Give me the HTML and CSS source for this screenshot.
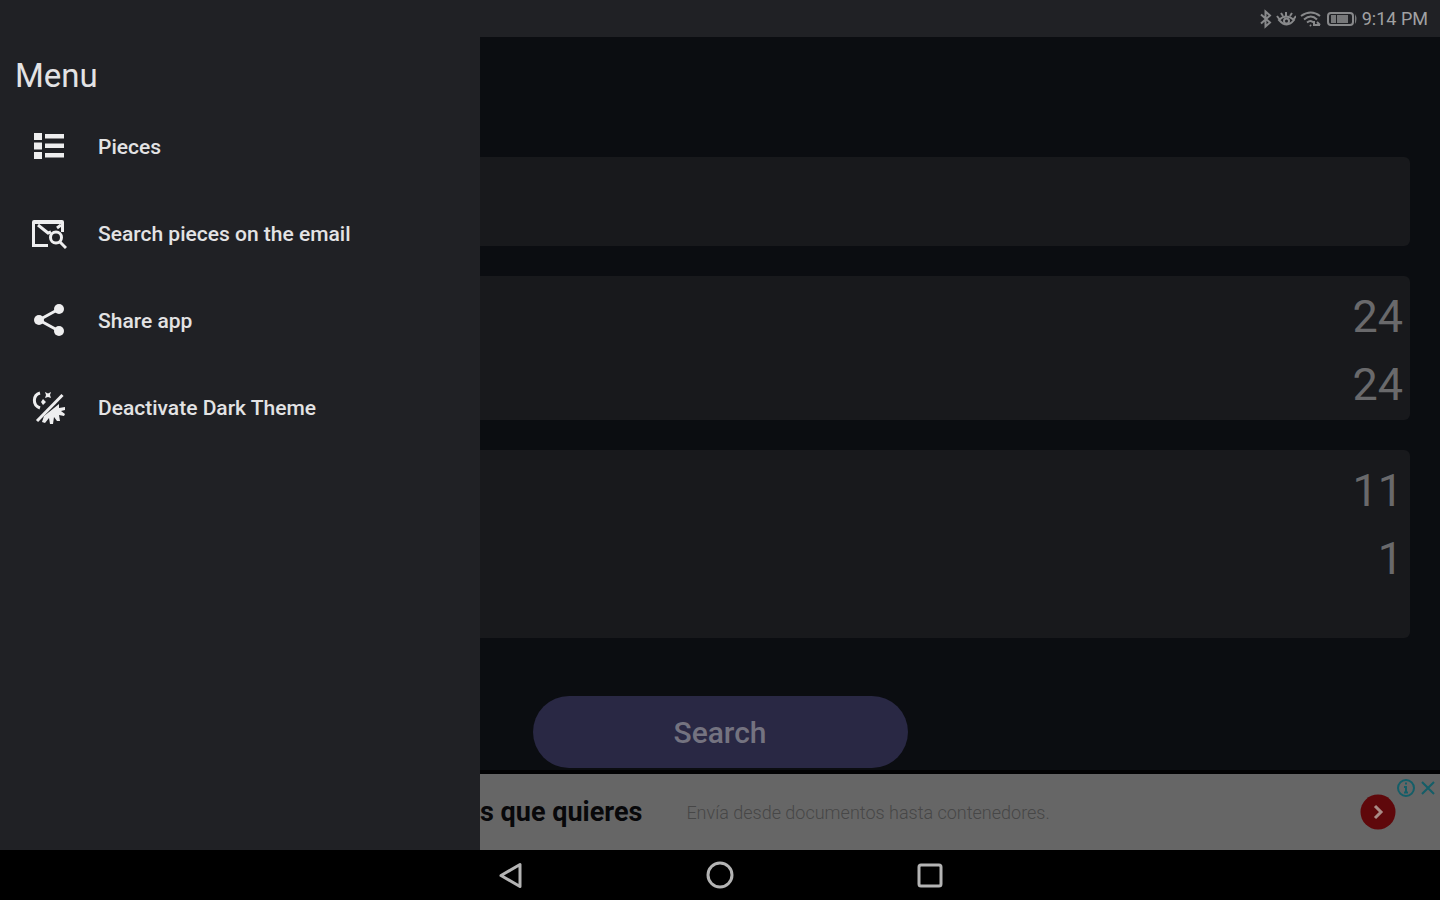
FILE: index.html
```html
<!DOCTYPE html>
<html lang="en">
<head>
<meta charset="utf-8">
<meta name="viewport" content="width=device-width, initial-scale=1">
<title>Menu</title>
<link rel="stylesheet" href="styles.css">
</head>
<body>
<header class="status">
  <svg class="status-icon bt" viewBox="0 0 14 20" aria-hidden="true"><path d="M3 5.500l9 8-4.500 4V2.500L12 6.500l-9 8"/></svg>
  <svg class="status-icon eye" viewBox="0 0 20 20" aria-hidden="true"><path d="M3 11q7-7 15 0q-7 9-15 0zM10 3v4M5 4l2 3M16 4l-2 3M1 7l3 4M20 7l-3 4"/><circle cx="10.500" cy="12" r="2.500"/></svg>
  <svg class="status-icon wifi" viewBox="0 0 22 20" aria-hidden="true"><path d="M1 7q10-7 19 0M4 10.500q7-6 13 0M7 13.500q4-3 6 0M10 16l1 1M14 12v4h6M17 13l3 3"/></svg>
  <svg class="status-icon battery" viewBox="0 0 32 20" aria-hidden="true"><rect x="2" y="4" width="25" height="12" rx="3"/><path class="solid" d="M5 6h5v8H5zM11 6h11v8H11zM29 5q3 5 0 10z"/></svg>
  <time>9:14 PM</time>
</header>

<div class="stage">
  <main class="page">
    <div class="cards">
      <section class="card blank"></section>
      <section class="card"><p>24</p><p>24</p></section>
      <section class="card tall"><p>11</p><p>1</p></section>
    </div>
    <button class="search" type="button">Search</button>
    <aside class="ad">
      <strong>s que quieres</strong>
      <span class="ad-text">Envía desde documentos hasta contenedores.</span>
      <a class="ad-go" href="#" aria-label="Abrir"><svg viewBox="0 0 36 36"><circle cx="18" cy="18" r="17.500"/><path d="M15 12l6 6-6 6"/></svg></a>
      <div class="ad-choices">
        <button type="button" aria-label="Ad information"><svg viewBox="0 0 20 20"><circle cx="10" cy="10" r="8"/><path d="M10 4.500v2M8 9h2v5M8 14.500h4"/></svg></button>
        <button type="button" aria-label="Close ad"><svg viewBox="0 0 20 20"><path d="M4 4l12 12M16 4L4 16"/></svg></button>
      </div>
    </aside>
  </main>

  <nav class="drawer">
    <h1>Menu</h1>
    <ul>
      <li><a href="#"><svg viewBox="0 0 36 36" aria-hidden="true"><path d="M3 4h8v7H3zM3 13.500h8v7H3zM3 23h8v7H3zM14 5h19v4.500H14zM14 14.500h19V19H14zM14 24h19v4.500H14z"/></svg>Pieces</a></li>
      <li><a href="#"><svg viewBox="0 0 36 36" aria-hidden="true"><path d="M3 4H31Q33 4 33 6V16H30V8H4L1 8V6Q1 4 3 4z"/><path class="line" d="M17 29.500H2.500V6M7 9l10 8 3-1M30 9l-4 3"/><circle class="line" cx="25" cy="21.500" r="5.500"/><path class="line" d="M29 26l6 6"/></svg>Search pieces on the email</a></li>
      <li><a href="#"><svg viewBox="0 0 36 36" aria-hidden="true"><path class="line" d="M28 6L8 17l20 11"/><circle cx="28" cy="6" r="5"/><circle cx="8" cy="17" r="5"/><circle cx="28" cy="28" r="5"/></svg>Share app</a></li>
      <li><a href="#"><svg viewBox="0 0 36 36" aria-hidden="true"><path class="line" d="M31.500 5L6 31"/><path class="line" d="M9 3C2 5 1 15 9 18"/><path d="M14 2l3 1.500L20 2l-1 3 1 3-3-1-3 1 1-3zM12 9l3 3-3 3-2-3zM28 14v4l6-1v3l-4 1 4 3-1 2-5-1 1 6h-3l-3-4-1 7h-3l-1-6-4 5-3-1 2-6z"/></svg>Deactivate Dark Theme</a></li>
    </ul>
  </nav>
</div>

<footer class="system">
  <button type="button" aria-label="Back"><svg viewBox="0 0 30 30"><path d="M25 4.500v22L6 15.500z"/></svg></button>
  <button type="button" aria-label="Home"><svg viewBox="0 0 30 30"><circle cx="15" cy="15" r="12"/></svg></button>
  <button type="button" aria-label="Recent apps"><svg viewBox="0 0 30 30"><rect x="4" y="5" width="22" height="21" rx="2"/></svg></button>
</footer>
</body>
</html>
```
FILE: styles.css
```css
* { box-sizing: border-box; }

body {
  margin: 0;
  min-height: 100vh;
  display: flex;
  flex-direction: column;
  background: #0b0d11;
  font-family: Roboto, "Liberation Sans", sans-serif;
}

h1, p, ul { margin: 0; padding: 0; }
ul { list-style: none; }
a { color: inherit; text-decoration: none; }
button { border: 0; padding: 0; background: none; font: inherit; color: inherit; cursor: pointer; }
svg { display: block; fill: none; }

.status {
  height: 37px;
  flex: none;
  display: flex;
  align-items: center;
  justify-content: flex-end;
  padding-right: 12px;
  background: #202125;
  color: #a0a1a3;
  font-size: 18px;
  font-weight: 400;
}
.status-icon { height: 20px; stroke: #88898b; stroke-width: 2; margin-right: 4px; }
.bt { width: 14px; }
.eye { width: 20px; }
.wifi { width: 22px; }
.battery { width: 32px; }
.solid { fill: #77787a; stroke: none; }

.stage { position: relative; flex: 1; display: flex; }

.page {
  flex: 1;
  display: flex;
  flex-direction: column;
  align-items: center;
  padding-top: 120px;
}
.cards {
  align-self: stretch;
  display: flex;
  flex-direction: column;
  gap: 30px;
  padding: 0 30px;
}
.card {
  min-height: 144px;
  padding: 7px 7px 0;
  border-radius: 6px;
  background: #18191c;
  color: #69696b;
  font-size: 45px;
  line-height: 68px;
  text-align: right;
}
.blank { min-height: 89px; }
.tall { min-height: 188px; }

.search {
  width: 375px;
  height: 72px;
  margin-top: 58px;
  border-radius: 36px;
  background: #292844;
  color: #747380;
  font-size: 30px;
  font-weight: 500;
}

.ad {
  position: relative;
  align-self: stretch;
  height: 80px;
  margin-top: auto;
  display: flex;
  align-items: center;
  padding: 0 44px 0 33.333%;
  border-top: 4px solid #030304;
  background: #666;
  color: #08080a;
}
.ad strong { font-size: 27px; font-weight: 700; margin-right: 44px; }
.ad-text { flex: 1; color: #474747; font-size: 18px; font-weight: 300; }
.ad-go svg { width: 36px; height: 36px; fill: #5f080b; }
.ad-go path { fill: none; stroke: #a98b86; stroke-width: 3; }
.ad-choices {
  position: absolute;
  top: 4px;
  right: 2px;
  display: flex;
  gap: 2px;
}
.ad-choices svg { width: 20px; height: 20px; stroke: #145e68; stroke-width: 2; }

.drawer {
  position: absolute;
  inset: 0 auto 0 0;
  width: 33.334%;
  padding-top: 19px;
  background: #202125;
  color: #e3e3e4;
}
.drawer h1 {
  padding-left: 15px;
  font-size: 33px;
  line-height: 40px;
  font-weight: 400;
}
.drawer a {
  display: flex;
  align-items: center;
  gap: 31px;
  height: 87px;
  padding-left: 31px;
  font-size: 21px;
  font-weight: 500;
}
.drawer ul { margin-top: 7px; }
.drawer svg { width: 36px; height: 36px; fill: #eeeeef; }
.drawer .line { fill: none; stroke: #eeeeef; stroke-width: 3; }

.system {
  height: 50px;
  flex: none;
  display: flex;
  align-items: center;
  justify-content: center;
  gap: 180px;
  background: #000;
}
.system svg { width: 30px; height: 30px; stroke: #b4b4b4; stroke-width: 3; stroke-linejoin: round; }
```
